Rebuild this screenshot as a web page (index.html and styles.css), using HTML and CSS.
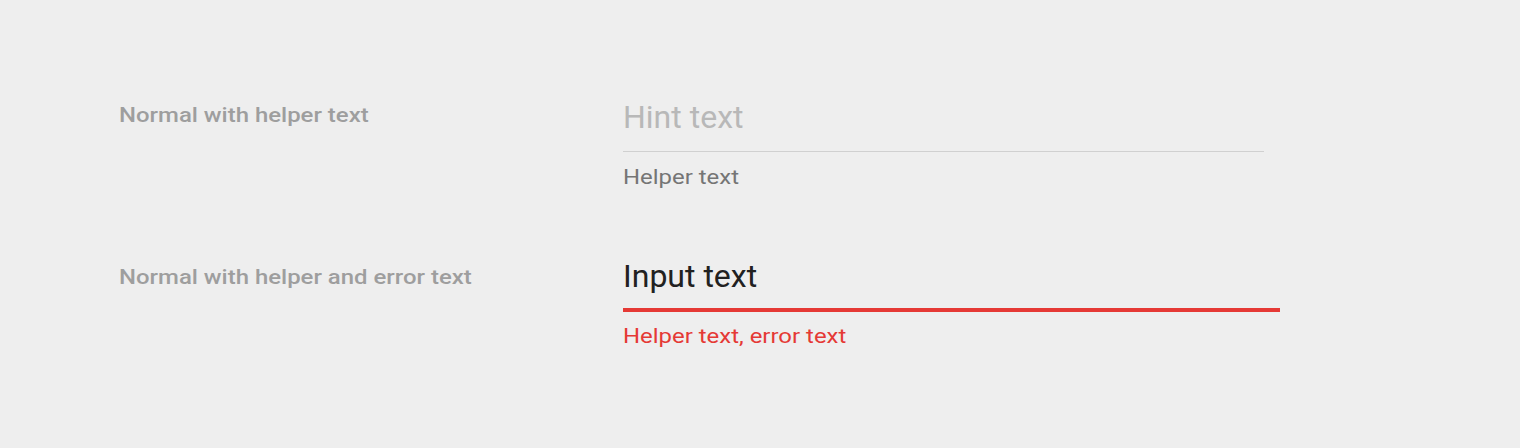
FILE: index.html
```html
<!DOCTYPE html>
<html lang="en">

<head>
    <meta charset="UTF-8" />
    <meta name="viewport" content="width=device-width, initial-scale=1.0" />
    <title>Text fields</title>
    <link rel="stylesheet" href="styles.css">
</head>

<body>
    <div class="spec">
        <div class="spec-row">
            <div class="spec-label"><span>Normal with helper text</span></div>
            <div class="field field-hint">
                <div class="field-input">Hint text</div>
                <div class="field-line"></div>
                <div class="field-helper"><span>Helper text</span></div>
            </div>
        </div>

        <div class="spec-row spec-row-error">
            <div class="spec-label"><span>Normal with helper and error text</span></div>
            <div class="field field-error">
                <div class="field-input">Input text</div>
                <div class="field-line"></div>
                <div class="field-helper"><span>Helper text, error text</span></div>
            </div>
        </div>
    </div>
</body>

</html>
```

FILE: styles.css
```css
* {
    box-sizing: border-box;
    margin: 0;
    padding: 0;
}

body {
    font-family: 'Roboto', 'Noto Sans', sans-serif;
    background: #eeeeee;
    width: 1520px;
    height: 448px;
    overflow: hidden;
}

.spec {
    padding: 98px 0 0 119px;
    display: flex;
    flex-direction: column;
    gap: 66px;
}

.spec-row {
    display: grid;
    grid-template-columns: 504px 1fr;
}

/* small text in the spec sheet is drawn a little wide */
.spec-label span,
.field-helper span {
    display: inline-block;
    transform: scaleX(1.14);
    transform-origin: left center;
    white-space: nowrap;
}

.spec-label {
    padding-top: 1px;
    font-size: 21px;
    font-weight: 500;
    color: #9e9e9e;
    line-height: 32px;
}

.spec-row-error .spec-label {
    padding-top: 4px;
}

.field-input {
    font-size: 32px;
    line-height: 38px;
    color: #212121;
}

.field-hint .field-input {
    color: #b8b8b8;
}

.field-line {
    margin-top: 15px;
    height: 1px;
    width: 641px;
    background: #d0d0d0;
}

.field-error .field-line {
    height: 4px;
    width: 657px;
    margin-top: 13px;
    background: #e53935;
}

.field-helper {
    margin-top: 11px;
    font-size: 21px;
    line-height: 28px;
    color: #757575;
}

.field-error .field-helper {
    margin-top: 10px;
    color: #e53935;
}
```
